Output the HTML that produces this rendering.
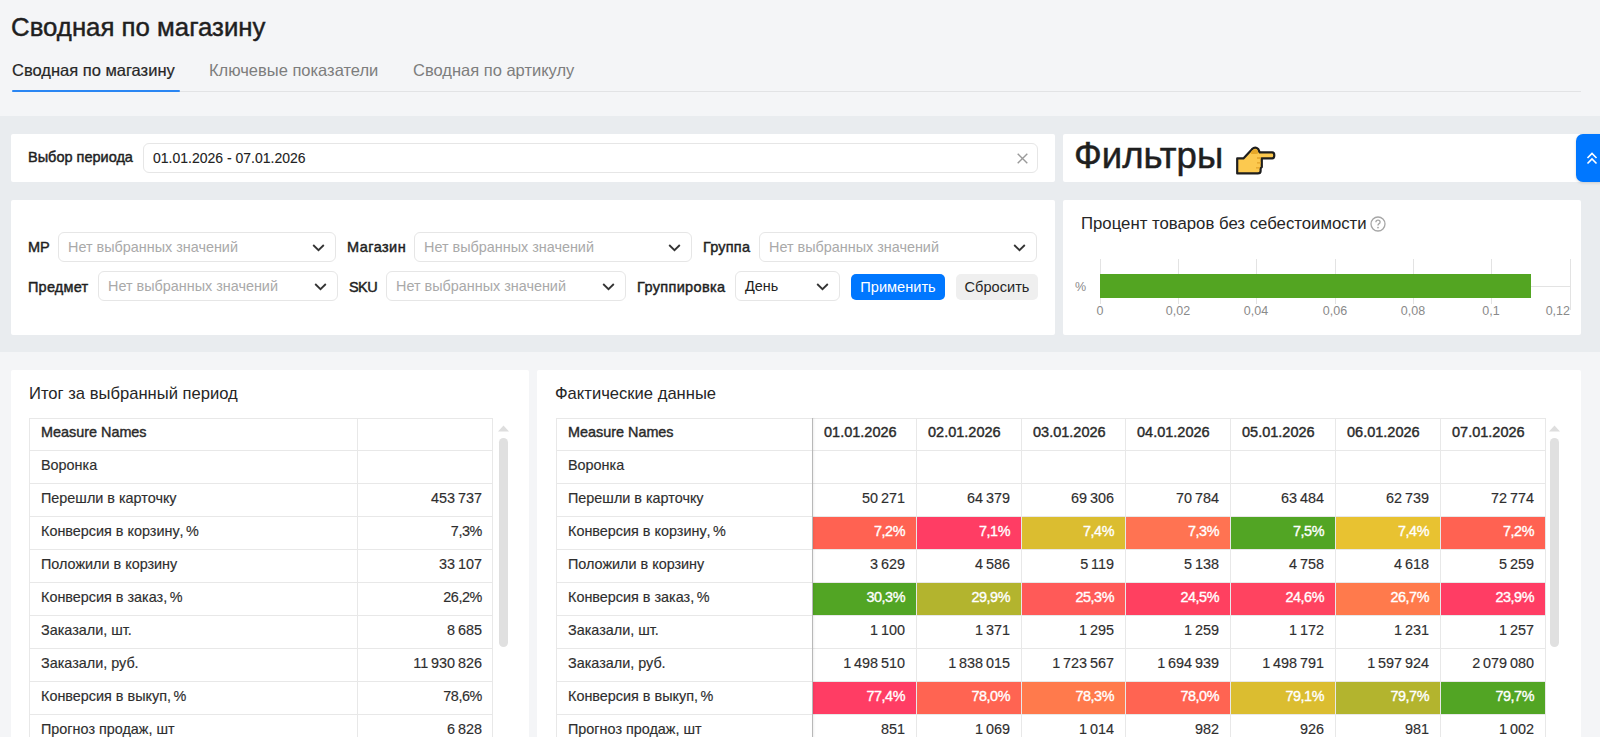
<!DOCTYPE html><html><head><meta charset="utf-8"><style>
*{box-sizing:border-box;margin:0;padding:0}
html,body{width:1600px;height:737px;overflow:hidden}
body{background:#f4f5f7;font-family:"Liberation Sans",sans-serif;color:#222;position:relative}
.a{position:absolute;white-space:nowrap}
.card{position:absolute;background:#fff;border-radius:2px}
.lbl{position:absolute;font-weight:400;font-size:14.5px;line-height:18px;color:#1f1f1f;-webkit-text-stroke:0.45px #1f1f1f;white-space:nowrap}
.inp{position:absolute;height:30px;border:1px solid #e6e6e6;border-radius:6px;background:#fff}
.ph{position:absolute;left:9px;top:5px;font-size:14.4px;line-height:18px;color:#a9a9a9;white-space:nowrap}
.chev{position:absolute;top:10.7px;right:10px;width:13px;height:8px}
.hl{position:absolute;height:1px;background:#e8e8e8}
.vl{position:absolute;width:1px;background:#e8e8e8}
.t{position:absolute;font-size:14.4px;line-height:18px;color:#2e2e2e;-webkit-text-stroke:0.15px #2e2e2e;white-space:nowrap}
.tb{font-weight:400;-webkit-text-stroke:0.4px #2a2a2a;color:#2a2a2a}
.r{text-align:right;word-spacing:-1.1px}
.ax{position:absolute;font-size:12.5px;line-height:14px;color:#8a8a8a;white-space:nowrap}
</style></head><body>
<div class="a" style="left:11px;top:11px;font-size:25.8px;line-height:32px;color:#1f1f1f;-webkit-text-stroke:0.45px #1f1f1f">Сводная по магазину</div>
<div class="a" style="left:12px;top:59px;font-size:16.5px;line-height:22px;color:#262626;-webkit-text-stroke:0.2px #262626">Сводная по магазину</div>
<div class="a" style="left:209px;top:59px;font-size:16.5px;line-height:22px;color:#7d7d7d">Ключевые показатели</div>
<div class="a" style="left:413px;top:59px;font-size:16.5px;line-height:22px;color:#7d7d7d">Сводная по артикулу</div>
<div class="a" style="left:12px;top:91px;width:1569px;height:1px;background:#e2e3e5"></div>
<div class="a" style="left:12px;top:90px;width:168px;height:2px;background:#2a86f3;border-radius:1px"></div>
<div class="a" style="left:0;top:116px;width:1600px;height:236px;background:#e9ecef"></div>
<div class="card" style="left:11px;top:134px;width:1044px;height:48px"></div>
<div class="lbl" style="left:28px;top:148px">Выбор периода</div>
<div class="inp" style="left:143px;top:143px;width:895px"><div class="ph" style="color:#222;font-size:14px;-webkit-text-stroke:0.1px #222">01.01.2026 - 07.01.2026</div><svg style="position:absolute;right:9px;top:9px;width:11px;height:11px" viewBox="0 0 11 11"><path d="M0.7 0.7 L10.3 10.3 M10.3 0.7 L0.7 10.3" stroke="#9a9a9a" stroke-width="1.4"/></svg></div>
<div class="card" style="left:1063px;top:134px;width:519px;height:48px"></div>
<div class="a" style="left:1074px;top:136px;font-size:36.6px;line-height:40px;color:#1f1f1f;-webkit-text-stroke:0.5px #1f1f1f">Фильтры</div>
<svg class="a" style="left:1230px;top:140px" width="52" height="40" viewBox="0 0 52 40">
<path d="M7.2 33.4 L7.2 18.4 L13.4 18.4 L21.8 9.4 Q25.2 6 28.2 9 L29.6 12.3 L42.2 12.3 Q44.3 12.3 44.3 15.3 Q44.3 18.4 42.2 18.4 L31.8 18.4 L31.8 27 L30.6 28.4 L30.6 31 Q30.6 33.4 27.8 33.4 Z" fill="#fcc94f" stroke="#1e1e1e" stroke-width="2.2" stroke-linejoin="round"/>
<path d="M21.5 11 Q24.5 8 27.5 10.2 L28.4 13 Q27.6 14 26 14 L21 14 Z" fill="#e6a829"/>
<path d="M27 18 L31 18 M27 22.9 L31 22.9 M26 27.8 L30 27.8" stroke="#e2a32a" stroke-width="1.3"/>
</svg>
<div class="a" style="left:1576px;top:134px;width:30px;height:48px;background:#0077ff;border-radius:7px;box-shadow:0 1px 3px rgba(0,0,0,.15)"></div>
<svg class="a" style="left:1586px;top:152px" width="12" height="13" viewBox="0 0 12 13"><path d="M1.5 6 L6 1.5 L10.5 6 M1.5 11.5 L6 7 L10.5 11.5" fill="none" stroke="#fff" stroke-width="1.6"/></svg>
<div class="card" style="left:11px;top:200px;width:1044px;height:135px"></div>
<div class="lbl" style="left:28px;top:238px">МР</div>
<div class="inp" style="left:58px;top:232px;width:278px"><div class="ph" style="color:#a9a9a9">Нет выбранных значений</div><svg class="chev" viewBox="0 0 13 8"><path d="M1.2 1 L6.5 6.2 L11.8 1" fill="none" stroke="#333" stroke-width="1.8"/></svg></div>
<div class="lbl" style="left:347px;top:238px;letter-spacing:0.45px">Магазин</div>
<div class="inp" style="left:414px;top:232px;width:278px"><div class="ph" style="color:#a9a9a9">Нет выбранных значений</div><svg class="chev" viewBox="0 0 13 8"><path d="M1.2 1 L6.5 6.2 L11.8 1" fill="none" stroke="#333" stroke-width="1.8"/></svg></div>
<div class="lbl" style="left:703px;top:238px;letter-spacing:0.2px">Группа</div>
<div class="inp" style="left:759px;top:232px;width:278px"><div class="ph" style="color:#a9a9a9">Нет выбранных значений</div><svg class="chev" viewBox="0 0 13 8"><path d="M1.2 1 L6.5 6.2 L11.8 1" fill="none" stroke="#333" stroke-width="1.8"/></svg></div>
<div class="lbl" style="left:28px;top:278px;letter-spacing:0.2px">Предмет</div>
<div class="inp" style="left:98px;top:271px;width:240px"><div class="ph" style="color:#a9a9a9">Нет выбранных значений</div><svg class="chev" viewBox="0 0 13 8"><path d="M1.2 1 L6.5 6.2 L11.8 1" fill="none" stroke="#333" stroke-width="1.8"/></svg></div>
<div class="lbl" style="left:349px;top:278px;letter-spacing:-0.6px">SKU</div>
<div class="inp" style="left:386px;top:271px;width:240px"><div class="ph" style="color:#a9a9a9">Нет выбранных значений</div><svg class="chev" viewBox="0 0 13 8"><path d="M1.2 1 L6.5 6.2 L11.8 1" fill="none" stroke="#333" stroke-width="1.8"/></svg></div>
<div class="lbl" style="left:637px;top:278px;letter-spacing:0.35px">Группировка</div>
<div class="inp" style="left:735px;top:271px;width:105px"><div class="ph" style="color:#222">День</div><svg class="chev" viewBox="0 0 13 8"><path d="M1.2 1 L6.5 6.2 L11.8 1" fill="none" stroke="#333" stroke-width="1.8"/></svg></div>
<div class="a" style="left:851px;top:274px;width:94px;height:26px;background:#0077ff;border-radius:5px;color:#fff;font-size:14.6px;line-height:26px;text-align:center">Применить</div>
<div class="a" style="left:956px;top:274px;width:82px;height:26px;background:#efefef;border-radius:5px;color:#262626;font-size:14.6px;line-height:26px;text-align:center">Сбросить</div>
<div class="card" style="left:1063px;top:200px;width:518px;height:135px"></div>
<div class="a" style="left:1081px;top:212.6px;font-size:16.75px;line-height:22px;color:#262626">Процент товаров без себестоимости</div>
<svg class="a" style="left:1370px;top:216px" width="16" height="16" viewBox="0 0 16 16"><circle cx="8" cy="8" r="7" fill="none" stroke="#a6a6a6" stroke-width="1.3"/><path d="M5.9 6.3 Q5.9 4.2 8 4.2 Q10.1 4.2 10.1 6.1 Q10.1 7.3 8.8 7.9 Q8 8.3 8 9.6" fill="none" stroke="#a6a6a6" stroke-width="1.3"/><circle cx="8" cy="11.6" r="0.9" fill="#a6a6a6"/></svg>
<div class="vl" style="left:1100px;top:259px;height:45px;background:#e3e3e3"></div>
<div class="vl" style="left:1178px;top:259px;height:45px;background:#e3e3e3"></div>
<div class="vl" style="left:1256px;top:259px;height:45px;background:#e3e3e3"></div>
<div class="vl" style="left:1335px;top:259px;height:45px;background:#e3e3e3"></div>
<div class="vl" style="left:1413px;top:259px;height:45px;background:#e3e3e3"></div>
<div class="vl" style="left:1491px;top:259px;height:45px;background:#e3e3e3"></div>
<div class="vl" style="left:1570px;top:259px;height:51px;background:#e3e3e3"></div>
<div class="hl" style="left:1531px;top:286px;width:39px;background:#e3e3e3"></div>
<div class="a" style="left:1100px;top:274px;width:431px;height:24px;background:#53a522"></div>
<div class="ax" style="left:1075px;top:280px">%</div>
<div class="ax" style="left:1060px;width:80px;text-align:center;top:304px">0</div>
<div class="ax" style="left:1138px;width:80px;text-align:center;top:304px">0,02</div>
<div class="ax" style="left:1216px;width:80px;text-align:center;top:304px">0,04</div>
<div class="ax" style="left:1295px;width:80px;text-align:center;top:304px">0,06</div>
<div class="ax" style="left:1373px;width:80px;text-align:center;top:304px">0,08</div>
<div class="ax" style="left:1451px;width:80px;text-align:center;top:304px">0,1</div>
<div class="ax" style="left:1490px;width:80px;text-align:right;top:304px">0,12</div>
<div class="card" style="left:11px;top:370px;width:518px;height:400px"></div>
<div class="card" style="left:537px;top:370px;width:1044px;height:400px"></div>
<div class="a" style="left:29px;top:383px;font-size:16.6px;line-height:22px;color:#262626">Итог за выбранный период</div>
<div class="a" style="left:555px;top:383px;font-size:16.6px;line-height:22px;color:#262626">Фактические данные</div>
<div class="hl" style="left:29px;top:418px;width:464px"></div>
<div class="hl" style="left:29px;top:450px;width:464px"></div>
<div class="hl" style="left:29px;top:483px;width:464px"></div>
<div class="hl" style="left:29px;top:516px;width:464px"></div>
<div class="hl" style="left:29px;top:549px;width:464px"></div>
<div class="hl" style="left:29px;top:582px;width:464px"></div>
<div class="hl" style="left:29px;top:615px;width:464px"></div>
<div class="hl" style="left:29px;top:648px;width:464px"></div>
<div class="hl" style="left:29px;top:681px;width:464px"></div>
<div class="hl" style="left:29px;top:714px;width:464px"></div>
<div class="vl" style="left:29px;top:418px;height:330px"></div>
<div class="vl" style="left:357px;top:418px;height:330px"></div>
<div class="vl" style="left:492px;top:418px;height:330px"></div>
<div class="t tb" style="left:41px;top:423px">Measure Names</div>
<div class="t" style="left:41px;top:455.6px">Воронка</div>
<div class="t" style="left:41px;top:488.6px">Перешли в карточку</div>
<div class="t r" style="left:357px;width:125px;top:488.6px">453 737</div>
<div class="t" style="left:41px;top:521.6px">Конверсия в корзину<span style="letter-spacing:-0.5px;word-spacing:-0.5px">, %</span></div>
<div class="t r" style="left:357px;width:125px;top:521.6px;letter-spacing:-0.4px">7,3%</div>
<div class="t" style="left:41px;top:554.6px">Положили в корзину</div>
<div class="t r" style="left:357px;width:125px;top:554.6px">33 107</div>
<div class="t" style="left:41px;top:587.6px">Конверсия в заказ<span style="letter-spacing:-0.5px;word-spacing:-0.5px">, %</span></div>
<div class="t r" style="left:357px;width:125px;top:587.6px;letter-spacing:-0.4px">26,2%</div>
<div class="t" style="left:41px;top:620.6px">Заказали, шт.</div>
<div class="t r" style="left:357px;width:125px;top:620.6px">8 685</div>
<div class="t" style="left:41px;top:653.6px">Заказали, руб.</div>
<div class="t r" style="left:357px;width:125px;top:653.6px">11 930 826</div>
<div class="t" style="left:41px;top:686.6px">Конверсия в выкуп<span style="letter-spacing:-0.5px;word-spacing:-0.5px">, %</span></div>
<div class="t r" style="left:357px;width:125px;top:686.6px;letter-spacing:-0.4px">78,6%</div>
<div class="t" style="left:41px;top:719.6px">Прогноз продаж, шт</div>
<div class="t r" style="left:357px;width:125px;top:719.6px">6 828</div>
<svg class="a" style="left:498px;top:425px" width="11" height="7" viewBox="0 0 11 7"><path d="M0 6.5 L5.5 0.5 L11 6.5 Z" fill="#dedede"/></svg>
<div class="a" style="left:499px;top:438px;width:9px;height:209px;background:#e0e0e0;border-radius:4.5px"></div>
<div class="a" style="left:813px;top:517px;width:103px;height:32px;background:#ff6252"></div>
<div class="a" style="left:917px;top:517px;width:104px;height:32px;background:#ff3d64"></div>
<div class="a" style="left:1022px;top:517px;width:103px;height:32px;background:#dbbd30"></div>
<div class="a" style="left:1126px;top:517px;width:104px;height:32px;background:#ff7352"></div>
<div class="a" style="left:1231px;top:517px;width:104px;height:32px;background:#52a524"></div>
<div class="a" style="left:1336px;top:517px;width:104px;height:32px;background:#e8c231"></div>
<div class="a" style="left:1441px;top:517px;width:104px;height:32px;background:#ff6252"></div>
<div class="a" style="left:813px;top:583px;width:103px;height:32px;background:#52a524"></div>
<div class="a" style="left:917px;top:583px;width:104px;height:32px;background:#b3b42e"></div>
<div class="a" style="left:1022px;top:583px;width:103px;height:32px;background:#ff5a58"></div>
<div class="a" style="left:1126px;top:583px;width:104px;height:32px;background:#ff4060"></div>
<div class="a" style="left:1231px;top:583px;width:104px;height:32px;background:#ff4360"></div>
<div class="a" style="left:1336px;top:583px;width:104px;height:32px;background:#ff7a4c"></div>
<div class="a" style="left:1441px;top:583px;width:104px;height:32px;background:#ff3d64"></div>
<div class="a" style="left:813px;top:682px;width:103px;height:32px;background:#ff3d64"></div>
<div class="a" style="left:917px;top:682px;width:104px;height:32px;background:#ff6452"></div>
<div class="a" style="left:1022px;top:682px;width:103px;height:32px;background:#ff7a4c"></div>
<div class="a" style="left:1126px;top:682px;width:104px;height:32px;background:#ff6452"></div>
<div class="a" style="left:1231px;top:682px;width:104px;height:32px;background:#dbbd30"></div>
<div class="a" style="left:1336px;top:682px;width:104px;height:32px;background:#b3b42e"></div>
<div class="a" style="left:1441px;top:682px;width:104px;height:32px;background:#52a524"></div>
<div class="hl" style="left:556px;top:418px;width:990px"></div>
<div class="hl" style="left:556px;top:450px;width:990px"></div>
<div class="hl" style="left:556px;top:483px;width:990px"></div>
<div class="hl" style="left:556px;top:516px;width:990px"></div>
<div class="hl" style="left:556px;top:549px;width:990px"></div>
<div class="hl" style="left:556px;top:582px;width:990px"></div>
<div class="hl" style="left:556px;top:615px;width:990px"></div>
<div class="hl" style="left:556px;top:648px;width:990px"></div>
<div class="hl" style="left:556px;top:681px;width:990px"></div>
<div class="hl" style="left:556px;top:714px;width:990px"></div>
<div class="vl" style="left:556px;top:418px;height:330px"></div>
<div class="vl" style="left:812px;top:418px;height:330px"></div>
<div class="vl" style="left:916px;top:418px;height:330px"></div>
<div class="vl" style="left:1021px;top:418px;height:330px"></div>
<div class="vl" style="left:1125px;top:418px;height:330px"></div>
<div class="vl" style="left:1230px;top:418px;height:330px"></div>
<div class="vl" style="left:1335px;top:418px;height:330px"></div>
<div class="vl" style="left:1440px;top:418px;height:330px"></div>
<div class="vl" style="left:1545px;top:418px;height:330px"></div>
<div class="vl" style="left:812px;top:418px;height:330px;background:#b8b8b8;box-shadow:1px 0 2px rgba(0,0,0,0.10)"></div>
<div class="t tb" style="left:568px;top:423px">Measure Names</div>
<div class="t tb" style="left:824px;top:423px;font-size:14.5px">01.01.2026</div>
<div class="t tb" style="left:928px;top:423px;font-size:14.5px">02.01.2026</div>
<div class="t tb" style="left:1033px;top:423px;font-size:14.5px">03.01.2026</div>
<div class="t tb" style="left:1137px;top:423px;font-size:14.5px">04.01.2026</div>
<div class="t tb" style="left:1242px;top:423px;font-size:14.5px">05.01.2026</div>
<div class="t tb" style="left:1347px;top:423px;font-size:14.5px">06.01.2026</div>
<div class="t tb" style="left:1452px;top:423px;font-size:14.5px">07.01.2026</div>
<div class="t" style="left:568px;top:455.6px">Воронка</div>
<div class="t" style="left:568px;top:488.6px">Перешли в карточку</div>
<div class="t r" style="left:812px;width:93px;top:488.6px;color:#2e2e2e">50 271</div>
<div class="t r" style="left:916px;width:94px;top:488.6px;color:#2e2e2e">64 379</div>
<div class="t r" style="left:1021px;width:93px;top:488.6px;color:#2e2e2e">69 306</div>
<div class="t r" style="left:1125px;width:94px;top:488.6px;color:#2e2e2e">70 784</div>
<div class="t r" style="left:1230px;width:94px;top:488.6px;color:#2e2e2e">63 484</div>
<div class="t r" style="left:1335px;width:94px;top:488.6px;color:#2e2e2e">62 739</div>
<div class="t r" style="left:1440px;width:94px;top:488.6px;color:#2e2e2e">72 774</div>
<div class="t" style="left:568px;top:521.6px">Конверсия в корзину<span style="letter-spacing:-0.5px;word-spacing:-0.5px">, %</span></div>
<div class="t r" style="left:812px;width:93px;top:521.6px;color:#fff;-webkit-text-stroke:0.35px #fff;letter-spacing:-0.45px">7,2%</div>
<div class="t r" style="left:916px;width:94px;top:521.6px;color:#fff;-webkit-text-stroke:0.35px #fff;letter-spacing:-0.45px">7,1%</div>
<div class="t r" style="left:1021px;width:93px;top:521.6px;color:#fff;-webkit-text-stroke:0.35px #fff;letter-spacing:-0.45px">7,4%</div>
<div class="t r" style="left:1125px;width:94px;top:521.6px;color:#fff;-webkit-text-stroke:0.35px #fff;letter-spacing:-0.45px">7,3%</div>
<div class="t r" style="left:1230px;width:94px;top:521.6px;color:#fff;-webkit-text-stroke:0.35px #fff;letter-spacing:-0.45px">7,5%</div>
<div class="t r" style="left:1335px;width:94px;top:521.6px;color:#fff;-webkit-text-stroke:0.35px #fff;letter-spacing:-0.45px">7,4%</div>
<div class="t r" style="left:1440px;width:94px;top:521.6px;color:#fff;-webkit-text-stroke:0.35px #fff;letter-spacing:-0.45px">7,2%</div>
<div class="t" style="left:568px;top:554.6px">Положили в корзину</div>
<div class="t r" style="left:812px;width:93px;top:554.6px;color:#2e2e2e">3 629</div>
<div class="t r" style="left:916px;width:94px;top:554.6px;color:#2e2e2e">4 586</div>
<div class="t r" style="left:1021px;width:93px;top:554.6px;color:#2e2e2e">5 119</div>
<div class="t r" style="left:1125px;width:94px;top:554.6px;color:#2e2e2e">5 138</div>
<div class="t r" style="left:1230px;width:94px;top:554.6px;color:#2e2e2e">4 758</div>
<div class="t r" style="left:1335px;width:94px;top:554.6px;color:#2e2e2e">4 618</div>
<div class="t r" style="left:1440px;width:94px;top:554.6px;color:#2e2e2e">5 259</div>
<div class="t" style="left:568px;top:587.6px">Конверсия в заказ<span style="letter-spacing:-0.5px;word-spacing:-0.5px">, %</span></div>
<div class="t r" style="left:812px;width:93px;top:587.6px;color:#fff;-webkit-text-stroke:0.35px #fff;letter-spacing:-0.45px">30,3%</div>
<div class="t r" style="left:916px;width:94px;top:587.6px;color:#fff;-webkit-text-stroke:0.35px #fff;letter-spacing:-0.45px">29,9%</div>
<div class="t r" style="left:1021px;width:93px;top:587.6px;color:#fff;-webkit-text-stroke:0.35px #fff;letter-spacing:-0.45px">25,3%</div>
<div class="t r" style="left:1125px;width:94px;top:587.6px;color:#fff;-webkit-text-stroke:0.35px #fff;letter-spacing:-0.45px">24,5%</div>
<div class="t r" style="left:1230px;width:94px;top:587.6px;color:#fff;-webkit-text-stroke:0.35px #fff;letter-spacing:-0.45px">24,6%</div>
<div class="t r" style="left:1335px;width:94px;top:587.6px;color:#fff;-webkit-text-stroke:0.35px #fff;letter-spacing:-0.45px">26,7%</div>
<div class="t r" style="left:1440px;width:94px;top:587.6px;color:#fff;-webkit-text-stroke:0.35px #fff;letter-spacing:-0.45px">23,9%</div>
<div class="t" style="left:568px;top:620.6px">Заказали, шт.</div>
<div class="t r" style="left:812px;width:93px;top:620.6px;color:#2e2e2e">1 100</div>
<div class="t r" style="left:916px;width:94px;top:620.6px;color:#2e2e2e">1 371</div>
<div class="t r" style="left:1021px;width:93px;top:620.6px;color:#2e2e2e">1 295</div>
<div class="t r" style="left:1125px;width:94px;top:620.6px;color:#2e2e2e">1 259</div>
<div class="t r" style="left:1230px;width:94px;top:620.6px;color:#2e2e2e">1 172</div>
<div class="t r" style="left:1335px;width:94px;top:620.6px;color:#2e2e2e">1 231</div>
<div class="t r" style="left:1440px;width:94px;top:620.6px;color:#2e2e2e">1 257</div>
<div class="t" style="left:568px;top:653.6px">Заказали, руб.</div>
<div class="t r" style="left:812px;width:93px;top:653.6px;color:#2e2e2e">1 498 510</div>
<div class="t r" style="left:916px;width:94px;top:653.6px;color:#2e2e2e">1 838 015</div>
<div class="t r" style="left:1021px;width:93px;top:653.6px;color:#2e2e2e">1 723 567</div>
<div class="t r" style="left:1125px;width:94px;top:653.6px;color:#2e2e2e">1 694 939</div>
<div class="t r" style="left:1230px;width:94px;top:653.6px;color:#2e2e2e">1 498 791</div>
<div class="t r" style="left:1335px;width:94px;top:653.6px;color:#2e2e2e">1 597 924</div>
<div class="t r" style="left:1440px;width:94px;top:653.6px;color:#2e2e2e">2 079 080</div>
<div class="t" style="left:568px;top:686.6px">Конверсия в выкуп<span style="letter-spacing:-0.5px;word-spacing:-0.5px">, %</span></div>
<div class="t r" style="left:812px;width:93px;top:686.6px;color:#fff;-webkit-text-stroke:0.35px #fff;letter-spacing:-0.45px">77,4%</div>
<div class="t r" style="left:916px;width:94px;top:686.6px;color:#fff;-webkit-text-stroke:0.35px #fff;letter-spacing:-0.45px">78,0%</div>
<div class="t r" style="left:1021px;width:93px;top:686.6px;color:#fff;-webkit-text-stroke:0.35px #fff;letter-spacing:-0.45px">78,3%</div>
<div class="t r" style="left:1125px;width:94px;top:686.6px;color:#fff;-webkit-text-stroke:0.35px #fff;letter-spacing:-0.45px">78,0%</div>
<div class="t r" style="left:1230px;width:94px;top:686.6px;color:#fff;-webkit-text-stroke:0.35px #fff;letter-spacing:-0.45px">79,1%</div>
<div class="t r" style="left:1335px;width:94px;top:686.6px;color:#fff;-webkit-text-stroke:0.35px #fff;letter-spacing:-0.45px">79,7%</div>
<div class="t r" style="left:1440px;width:94px;top:686.6px;color:#fff;-webkit-text-stroke:0.35px #fff;letter-spacing:-0.45px">79,7%</div>
<div class="t" style="left:568px;top:719.6px">Прогноз продаж, шт</div>
<div class="t r" style="left:812px;width:93px;top:719.6px;color:#2e2e2e">851</div>
<div class="t r" style="left:916px;width:94px;top:719.6px;color:#2e2e2e">1 069</div>
<div class="t r" style="left:1021px;width:93px;top:719.6px;color:#2e2e2e">1 014</div>
<div class="t r" style="left:1125px;width:94px;top:719.6px;color:#2e2e2e">982</div>
<div class="t r" style="left:1230px;width:94px;top:719.6px;color:#2e2e2e">926</div>
<div class="t r" style="left:1335px;width:94px;top:719.6px;color:#2e2e2e">981</div>
<div class="t r" style="left:1440px;width:94px;top:719.6px;color:#2e2e2e">1 002</div>
<svg class="a" style="left:1549px;top:425px" width="11" height="7" viewBox="0 0 11 7"><path d="M0 6.5 L5.5 0.5 L11 6.5 Z" fill="#dedede"/></svg>
<div class="a" style="left:1550px;top:438px;width:9px;height:209px;background:#e0e0e0;border-radius:4.5px"></div>
</body></html>
